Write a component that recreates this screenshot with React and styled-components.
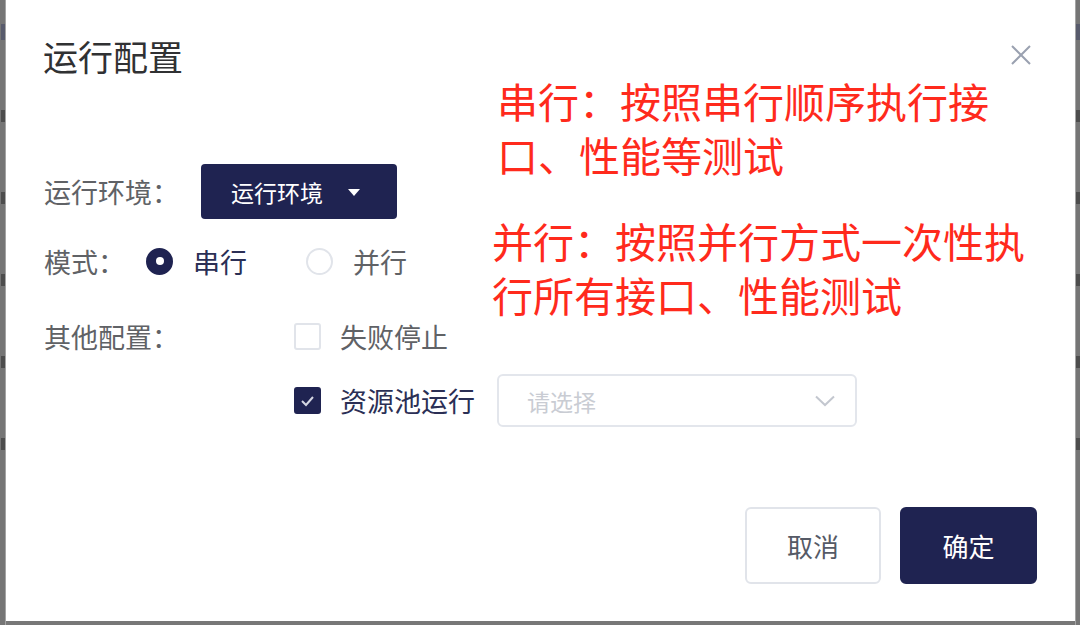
import React from 'react';
import styled, { createGlobalStyle } from 'styled-components';

const navy = '#1f2351';

const GlobalStyle = createGlobalStyle`
  html, body {
    margin: 0;
    padding: 0;
    background: #777777;
    font-family: "Noto Sans CJK SC", "Noto Sans", sans-serif;
  }
`;

const Screen = styled.div`
  display: flex;
  width: 1080px;
  height: 625px;
  overflow: hidden;
  background: #777777;
`;

const Edge = styled.div`
  width: ${p => p.$width}px;
  height: 100%;
  flex-shrink: 0;
  display: flex;
  flex-direction: column;
  align-items: ${p => (p.$side === 'left' ? 'flex-end' : 'flex-start')};
  gap: 70px;
  padding-top: 24px;
  box-sizing: border-box;
  background: #757575;
  border-${p => (p.$side === 'left' ? 'right' : 'left')}: 1px solid #a4a4a4;
`;

const EdgeMark = styled.span`
  display: block;
  width: 4px;
  height: ${p => (p.$tall ? 16 : 12)}px;
  background: ${p => (p.$blue ? '#4b5068' : '#3c3c3c')};
  opacity: 0.7;
`;

const Modal = styled.div`
  position: relative;
  width: 1069px;
  height: 621px;
  flex-shrink: 0;
  background: #ffffff;
  display: flex;
  flex-direction: column;
  box-sizing: border-box;
`;

const Header = styled.div`
  display: flex;
  align-items: center;
  justify-content: space-between;
  padding: 36px 43px 0 37px;
`;

const Title = styled.h2`
  margin: 0;
  font-size: 35px;
  line-height: 40px;
  font-weight: 400;
  color: #303133;
`;

const Close = styled.button`
  width: 22px;
  height: 22px;
  padding: 0;
  border: none;
  background: none;
  display: flex;
  margin-top: -3px;
`;

const Body = styled.div`
  padding-left: 38px;
  display: flex;
  flex-direction: column;
`;

const Row = styled.div`
  display: flex;
  align-items: center;
  height: ${p => p.$height}px;
  margin-top: ${p => p.$gap}px;
`;

const Label = styled.span`
  width: ${p => p.$width}px;
  flex-shrink: 0;
  font-size: 27px;
  color: #606266;
  white-space: nowrap;
`;

const DropButton = styled.button`
  width: 196px;
  height: 55px;
  border: none;
  border-radius: 4px;
  background: ${navy};
  color: #ffffff;
  font-family: inherit;
  font-size: 23px;
  display: flex;
  align-items: center;
  padding: 0 0 0 30px;
  gap: 25px;
`;

const Caret = styled.span`
  width: 0;
  height: 0;
  border-left: 6px solid transparent;
  border-right: 6px solid transparent;
  border-top: 7px solid #ffffff;
  margin-top: 2px;
`;

const Choice = styled.label`
  display: flex;
  align-items: center;
  gap: ${p => p.$gap || 20}px;
  margin-right: ${p => p.$spacing || 0}px;
  font-size: 27px;
  color: ${p => (p.$active ? '#2b2f55' : '#606266')};
  white-space: nowrap;
`;

const Radio = styled.span`
  width: 27px;
  height: 27px;
  border-radius: 50%;
  box-sizing: border-box;
  background: ${p => (p.$checked ? navy : '#ffffff')};
  border: 2px solid ${p => (p.$checked ? navy : '#e1e4ea')};
  display: flex;
  align-items: center;
  justify-content: center;

  &::after {
    content: '';
    width: 8px;
    height: 8px;
    border-radius: 50%;
    background: #ffffff;
    display: ${p => (p.$checked ? 'block' : 'none')};
  }
`;

const Checkbox = styled.span`
  width: 27px;
  height: 27px;
  border-radius: 3px;
  box-sizing: border-box;
  background: ${p => (p.$checked ? navy : '#ffffff')};
  border: 2px solid ${p => (p.$checked ? navy : '#e1e4ea')};
  display: flex;
  align-items: center;
  justify-content: center;
`;

const Select = styled.div`
  width: 360px;
  height: 53px;
  margin-left: 22px;
  box-sizing: border-box;
  border: 2px solid #e3e6ec;
  border-radius: 6px;
  display: flex;
  align-items: center;
  justify-content: space-between;
  padding: 0 20px 0 28px;
  font-size: 23px;
  color: #c9ccd3;
`;

const Footer = styled.div`
  margin-top: auto;
  display: flex;
  justify-content: flex-end;
  gap: 19px;
  padding: 0 38px 37px 0;
`;

const FooterButton = styled.button`
  width: ${p => (p.$primary ? 137 : 136)}px;
  height: 77px;
  box-sizing: border-box;
  border-radius: 6px;
  border: 2px solid ${p => (p.$primary ? navy : '#e1e4ea')};
  background: ${p => (p.$primary ? navy : '#ffffff')};
  color: ${p => (p.$primary ? '#ffffff' : '#555a66')};
  font-family: inherit;
  font-size: 26px;
`;

const Note = styled.p`
  position: absolute;
  left: ${p => p.$left}px;
  top: ${p => p.$top}px;
  margin: 0;
  font-size: 41px;
  line-height: 54px;
  color: #ff2a1c;
  white-space: nowrap;
`;

const NoteLine = styled.span`
  display: block;
`;

const App = () => {
  const marks = [true, false, false, false, false, false];
  return (
    <>
      <GlobalStyle />
      <Screen>
        <Edge $width={6} $side="left">
          {marks.map((blue, i) => (
            <EdgeMark key={i} $blue={blue} $tall={blue} />
          ))}
        </Edge>
        <Modal>
          <Header>
            <Title>运行配置</Title>
            <Close aria-label="关闭">
              <svg width="22" height="22" viewBox="0 0 22 22">
                <path d="M2 2 L20 20 M20 2 L2 20" stroke="#9aa1b0" strokeWidth="2" fill="none" />
              </svg>
            </Close>
          </Header>

          <Body>
            <Row $height={55} $gap={88}>
              <Label $width={157}>运行环境：</Label>
              <DropButton>
                运行环境
                <Caret />
              </DropButton>
            </Row>

            <Row $height={40} $gap={22}>
              <Label $width={102}>模式：</Label>
              <Choice $active $spacing={59} $gap={20}>
                <Radio $checked />
                串行
              </Choice>
              <Choice>
                <Radio />
                并行
              </Choice>
            </Row>

            <Row $height={40} $gap={35}>
              <Label $width={250}>其他配置：</Label>
              <Choice $gap={19}>
                <Checkbox />
                失败停止
              </Choice>
            </Row>

            <Row $height={53} $gap={18}>
              <Label $width={250} />
              <Choice $active $gap={19}>
                <Checkbox $checked>
                  <svg width="15" height="12" viewBox="0 0 15 12">
                    <path d="M2 6 L6 10 L13 2" stroke="#d4d6e2" strokeWidth="2" fill="none" />
                  </svg>
                </Checkbox>
                资源池运行
              </Choice>
              <Select>
                请选择
                <svg width="20" height="12" viewBox="0 0 20 12">
                  <path d="M1 1.5 L10 10 L19 1.5" stroke="#c3c7cf" strokeWidth="2" fill="none" />
                </svg>
              </Select>
            </Row>
          </Body>

          <Footer>
            <FooterButton>取消</FooterButton>
            <FooterButton $primary>确定</FooterButton>
          </Footer>

          <Note $left={491} $top={73}>
            <NoteLine>串行：按照串行顺序执行接</NoteLine>
            <NoteLine>口、性能等测试</NoteLine>
          </Note>
          <Note $left={486} $top={213}>
            <NoteLine>并行：按照并行方式一次性执</NoteLine>
            <NoteLine>行所有接口、性能测试</NoteLine>
          </Note>
        </Modal>
        <Edge $width={5} $side="right">
          {marks.map((blue, i) => (
            <EdgeMark key={i} $blue={blue} $tall={blue} />
          ))}
        </Edge>
      </Screen>
    </>
  );
};

export default App;
